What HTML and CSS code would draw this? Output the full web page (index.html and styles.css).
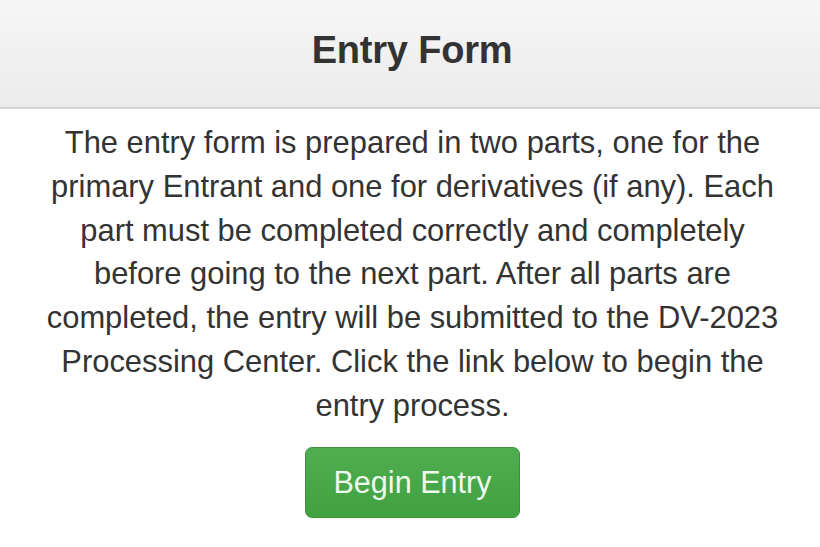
FILE: index.html
```html
<!DOCTYPE html>
<html>
<head>
<meta charset="utf-8">
<link rel="stylesheet" href="styles.css">
</head>
<body>
<header class="bar">
  <h1 class="title">Entry Form</h1>
</header>
<main class="content">
  <p class="intro">The entry form is prepared in two parts, one for the<br>primary Entrant and one for derivatives (if any). Each<br>part must be completed correctly and completely<br>before going to the next part. After all parts are<br>completed, the entry will be submitted to the DV-2023<br>Processing Center. Click the link below to begin the<br>entry process.</p>
  <a class="btn" href="#">Begin Entry</a>
</main>
</body>
</html>
```
FILE: styles.css
```css
html, body {
  margin: 0;
  padding: 0;
  background: #ffffff;
}
body {
  font-family: "Liberation Sans", Arial, Helvetica, sans-serif;
  color: #333333;
}
.bar {
  height: 101px;
  padding: 0 0 6px 4px;
  background: linear-gradient(to bottom, #f6f6f6 0%, #ebebeb 100%);
  border-bottom: 2px solid #d4d4d4;
  display: flex;
  align-items: center;
  justify-content: center;
}
.title {
  margin: 0;
  font-size: 38px;
  font-weight: bold;
  color: #333333;
  letter-spacing: -0.2px;
}
.content {
  display: flex;
  flex-direction: column;
  align-items: center;
  padding: 12px 8px 0 13px;
}
.intro {
  margin: 0;
  font-size: 30.9px;
  line-height: 43.8px;
  text-align: center;
  color: #333333;
}
.btn {
  margin-top: 19px;
  display: inline-block;
  padding: 13px 27px;
  font-size: 30.6px;
  line-height: 43px;
  color: #eef8ee;
  text-decoration: none;
  border: 1px solid #3d913d;
  border-radius: 7px;
  background: linear-gradient(to bottom, #4fae4f 0%, #41a141 100%);
}
```
